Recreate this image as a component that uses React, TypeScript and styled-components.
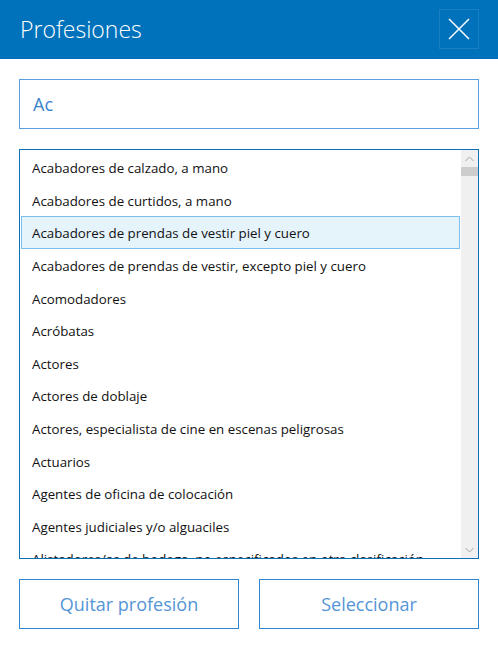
import { FC } from "react";
import styled, { createGlobalStyle } from "styled-components";

const professions = [
  "Acabadores de calzado, a mano",
  "Acabadores de curtidos, a mano",
  "Acabadores de prendas de vestir piel y cuero",
  "Acabadores de prendas de vestir, excepto piel y cuero",
  "Acomodadores",
  "Acróbatas",
  "Actores",
  "Actores de doblaje",
  "Actores, especialista de cine en escenas peligrosas",
  "Actuarios",
  "Agentes de oficina de colocación",
  "Agentes judiciales y/o alguaciles",
  "Alistadores/as de bodega, no especificados en otra clasificación",
];

const SELECTED = 2;

const GlobalStyle = createGlobalStyle`
  html, body {
    margin: 0;
    padding: 0;
    background: #ffffff;
  }

  body {
    font-family: "Open Sans", "Noto Sans", sans-serif;
  }
`;

const App: FC = () => (
  <>
    <GlobalStyle />
    <Dialog>
      <Header>
        <Title>Profesiones</Title>
        <CloseButton aria-label="Cerrar">
          <svg width="22" height="22" viewBox="0 0 22 22">
            <path
              d="M1 1 L21 21 M21 1 L1 21"
              stroke="#ffffff"
              strokeWidth="1.5"
              fill="none"
            />
          </svg>
        </CloseButton>
      </Header>

      <Body>
        <SearchInput defaultValue="Ac" />

        <ListBox>
          <Items>
            {professions.map((name, i) => (
              <Item key={name} $selected={i === SELECTED}>
                {name}
              </Item>
            ))}
          </Items>
          <ScrollTrack>
            <Arrow>
              <svg width="9" height="6" viewBox="0 0 9 6">
                <path d="M0.5 5 L4.5 1 L8.5 5" stroke="#a6a6a6" fill="none" />
              </svg>
            </Arrow>
            <Thumb />
            <TrackFill />
            <Arrow>
              <svg width="9" height="6" viewBox="0 0 9 6">
                <path d="M0.5 1 L4.5 5 L8.5 1" stroke="#a6a6a6" fill="none" />
              </svg>
            </Arrow>
          </ScrollTrack>
        </ListBox>

        <Actions>
          <ActionButton>Quitar profesión</ActionButton>
          <ActionButton>Seleccionar</ActionButton>
        </Actions>
      </Body>
    </Dialog>
  </>
);

const Dialog = styled.div`
  width: 498px;
  height: 646px;
  display: flex;
  flex-direction: column;
  background: #ffffff;
`;

const Header = styled.div`
  height: 59px;
  display: flex;
  align-items: center;
  justify-content: space-between;
  padding: 0 20px 1px 20px;
  box-sizing: border-box;
  background: #0072bb;
`;

const Title = styled.h1`
  margin: 0;
  font-family: "Open Sans", sans-serif;
  font-weight: 300;
  font-size: 23px;
  color: #ffffff;
`;

const CloseButton = styled.button`
  width: 40px;
  height: 40px;
  margin-right: -1px;
  display: flex;
  align-items: center;
  justify-content: center;
  padding: 0;
  background: transparent;
  border: 1px solid #1a7fc2;
`;

const Body = styled.div`
  display: flex;
  flex-direction: column;
  padding: 20px 19px 0 19px;
`;

const SearchInput = styled.input`
  height: 50px;
  box-sizing: border-box;
  padding: 0 13px;
  border: 1px solid #5c9fe0;
  outline: none;
  font-family: "Open Sans", sans-serif;
  font-size: 18px;
  color: #3a82cc;
`;

const ListBox = styled.div`
  margin-top: 20px;
  height: 410px;
  box-sizing: border-box;
  display: flex;
  border: 1px solid #0a70b8;
  overflow: hidden;
`;

const Items = styled.div`
  flex: 1;
  padding: 1px 1px 0 1px;
  overflow: hidden;
`;

const Item = styled.div<{ $selected?: boolean }>`
  height: 32.6px;
  box-sizing: border-box;
  display: flex;
  align-items: center;
  padding: 2px 0 0 10px;
  white-space: nowrap;
  font-family: "Open Sans", sans-serif;
  font-size: 13.3px;
  color: #111111;
  border: 1px solid ${(p) => (p.$selected ? "#7cc1ee" : "transparent")};
  background: ${(p) => (p.$selected ? "#e5f3fb" : "transparent")};
`;

const ScrollTrack = styled.div`
  width: 17px;
  display: flex;
  flex-direction: column;
  background: #f0f0f0;
`;

const Arrow = styled.div`
  height: 17px;
  display: flex;
  align-items: center;
  justify-content: center;
`;

const Thumb = styled.div`
  height: 9px;
  background: #cdcdcd;
`;

const TrackFill = styled.div`
  flex: 1;
`;

const Actions = styled.div`
  margin-top: 20px;
  display: grid;
  grid-template-columns: 1fr 1fr;
  gap: 20px;
`;

const ActionButton = styled.button`
  height: 50px;
  padding: 0;
  background: #ffffff;
  border: 1px solid #2f86cf;
  font-family: "Open Sans", sans-serif;
  font-size: 18px;
  color: #5495d6;
`;

export default App;
